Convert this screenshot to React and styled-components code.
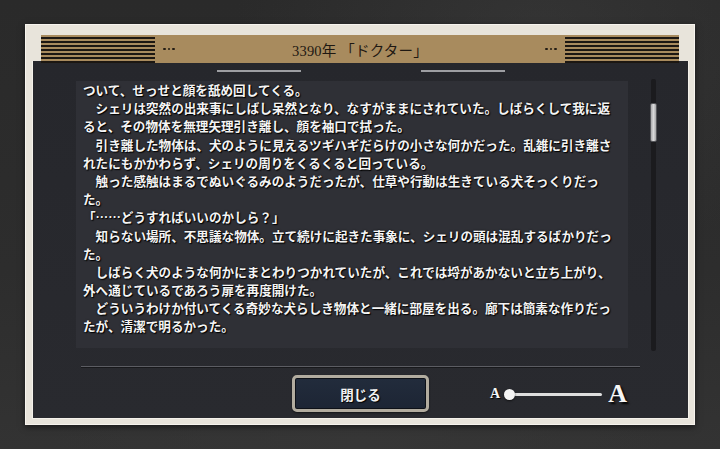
import React from 'react';
import styled, { createGlobalStyle } from 'styled-components';

const GlobalStyle = createGlobalStyle`
  html, body {
    margin: 0;
    padding: 0;
    background: #262626;
  }
`;

const lines = [
  'ついて、せっせと顔を舐め回してくる。',
  '　シェリは突然の出来事にしばし呆然となり、なすがままにされていた。しばらくして我に返',
  'ると、その物体を無理矢理引き離し、顔を袖口で拭った。',
  '　引き離した物体は、犬のように見えるツギハギだらけの小さな何かだった。乱雑に引き離さ',
  'れたにもかかわらず、シェリの周りをくるくると回っている。',
  '　触った感触はまるでぬいぐるみのようだったが、仕草や行動は生きている犬そっくりだっ',
  'た。',
  '「……どうすればいいのかしら？」',
  '　知らない場所、不思議な物体。立て続けに起きた事象に、シェリの頭は混乱するばかりだっ',
  'た。',
  '　しばらく犬のような何かにまとわりつかれていたが、これでは埒があかないと立ち上がり、',
  '外へ通じているであろう扉を再度開けた。',
  '　どういうわけか付いてくる奇妙な犬らしき物体と一緒に部屋を出る。廊下は簡素な作りだっ',
  'たが、清潔で明るかった。',
];

const Page = styled.div`
  width: 720px;
  height: 449px;
  box-sizing: border-box;
  padding: 24px 0 0 25px;
  overflow: hidden;
  background:
    radial-gradient(ellipse at 75% 8%, rgba(70, 70, 70, 0.35), transparent 40%),
    radial-gradient(ellipse at 50% 100%, #363636 0%, transparent 60%),
    linear-gradient(180deg, #2a2a2a 0%, #2d2d2d 60%, #333 100%);
`;

const Frame = styled.div`
  width: 670px;
  height: 401px;
  box-sizing: border-box;
  padding: 10px 5px 5px 6px;
  background: #e8e4db;
  border: 1px solid #f7f4ee;
  box-shadow: 0 2px 6px rgba(0, 0, 0, 0.5);
  display: flex;
  flex-direction: column;
`;

const Header = styled.div`
  height: 28px;
  margin: 0 10px -2px 9px;
  background: #a88b5e;
  display: flex;
  align-items: center;
  position: relative;
  z-index: 1;
`;

const Stripes = styled.div`
  width: 114px;
  align-self: stretch;
  background: repeating-linear-gradient(
    180deg,
    #1c1712 0px,
    #1c1712 1.6px,
    #a88b5e 1.6px,
    #a88b5e 4px
  );
  background-position: 0 2px;
`;

const Dots = styled.div`
  display: flex;
  gap: 2px;
  margin: 0 ${(p) => p.$right}px 0 ${(p) => p.$left}px;

  span {
    width: 2.6px;
    height: 2.6px;
    border-radius: 50%;
    background: #231c14;
  }
`;

const Title = styled.div`
  flex: 1;
  text-align: center;
  font-family: 'Liberation Serif', 'Noto Sans CJK JP', serif;
  font-size: 14.5px;
  color: #1e1812;
  letter-spacing: 0.2px;
`;

const Panel = styled.div`
  flex: 1;
  background: linear-gradient(180deg, #26272c 0%, #292a2f 100%);
  border: 1px solid #f4f1ea;
  border-top: 0;
  display: flex;
  flex-direction: column;
  padding-top: 9px;
`;

const Tabs = styled.div`
  display: flex;
  justify-content: center;
  gap: 120px;
  height: 2px;
`;

const TabMark = styled.div`
  width: 84px;
  height: 2px;
  background: #9d9ea2;
`;

const ContentRow = styled.div`
  display: flex;
  margin-top: 7px;
  padding-left: 43px;
  height: 272px;
`;

const TextBox = styled.div`
  width: 552px;
  height: 267px;
  margin-top: 2px;
  box-sizing: border-box;
  padding: 0 0 0 7px;
  background: #2f3036;
  overflow: hidden;
`;

const Line = styled.div`
  white-space: nowrap;
  height: 18.2px;
  line-height: 18.2px;
  font-family: 'Noto Sans CJK JP', 'Liberation Serif', sans-serif;
  font-size: 12.6px;
  font-weight: 700;
  color: #f4f4f4;
  text-shadow: 1px 1px 1px #000, 0 0 2px rgba(0, 0, 0, 0.8);
`;

const ScrollTrack = styled.div`
  width: 5px;
  margin-left: 23px;
  background: #1b1b1e;
  border-radius: 2px;
  display: flex;
  justify-content: center;
`;

const ScrollThumb = styled.div`
  width: 7px;
  height: 39px;
  margin-top: 24px;
  flex-shrink: 0;
  box-sizing: border-box;
  border: 1px solid #55565a;
  border-radius: 2px;
  background: linear-gradient(90deg, #a9a9ab 0%, #d8d8d9 50%, #a5a5a7 100%);
`;

const Separator = styled.div`
  height: 1px;
  margin: 15px 0 0 48px;
  width: 559px;
  background: #5c5d63;
  box-shadow: 0 1px 0 rgba(0, 0, 0, 0.4);
`;

const Footer = styled.div`
  display: grid;
  grid-template-columns: 1fr auto 1fr;
  align-items: center;
  margin-top: 8px;
`;

const CloseButton = styled.button`
  grid-column: 2;
  width: 137px;
  height: 37px;
  box-sizing: border-box;
  border: 3px solid #b2ac9f;
  border-radius: 5px;
  background: linear-gradient(180deg, #222c3c 0%, #1d2534 100%);
  box-shadow: inset 0 0 0 1px #0e1117, 0 1px 2px rgba(0, 0, 0, 0.5);
  color: #f2f2f2;
  font-family: 'Noto Sans CJK JP', sans-serif;
  font-size: 13.5px;
  font-weight: 700;
  text-shadow: 1px 1px 1px #000;
  cursor: pointer;
  padding: 0;
`;

const SizeControl = styled.div`
  grid-column: 3;
  display: flex;
  align-items: center;
  margin-left: 61px;
  margin-top: 1px;
`;

const Glyph = styled.span`
  font-family: 'Liberation Serif', serif;
  font-weight: 700;
  font-size: ${(p) => p.$size}px;
  line-height: 1;
  color: #f6f6f6;
  text-shadow: ${(p) => (p.$size > 16 ? '2px 2px 2px #000' : '1px 1px 1px #000')};
`;

const Track = styled.div`
  width: 97px;
  height: 3px;
  margin: 0 6px 0 5px;
  border-radius: 2px;
  background: #dedede;
  display: flex;
  align-items: center;
`;

const Knob = styled.div`
  width: 11px;
  height: 11px;
  margin-left: -1px;
  flex-shrink: 0;
  border-radius: 50%;
  background: #f4f4f4;
  box-shadow: 0 1px 2px rgba(0, 0, 0, 0.6);
`;

function HeaderDots({ left, right }) {
  return (
    <Dots $left={left} $right={right}>
      <span />
      <span />
      <span />
    </Dots>
  );
}

export default function App() {
  return (
    <>
      <GlobalStyle />
      <Page>
        <Frame>
          <Header>
            <Stripes />
            <HeaderDots left={8} right={0} />
            <Title>3390年 「ドクター」</Title>
            <HeaderDots left={0} right={8} />
            <Stripes />
          </Header>
          <Panel>
            <Tabs>
              <TabMark />
              <TabMark />
            </Tabs>
            <ContentRow>
              <TextBox>
                {lines.map((text, i) => (
                  <Line key={i}>{text}</Line>
                ))}
              </TextBox>
              <ScrollTrack>
                <ScrollThumb />
              </ScrollTrack>
            </ContentRow>
            <Separator />
            <Footer>
              <CloseButton type="button">閉じる</CloseButton>
              <SizeControl>
                <Glyph $size={14}>A</Glyph>
                <Track>
                  <Knob />
                </Track>
                <Glyph $size={26}>A</Glyph>
              </SizeControl>
            </Footer>
          </Panel>
        </Frame>
      </Page>
    </>
  );
}
